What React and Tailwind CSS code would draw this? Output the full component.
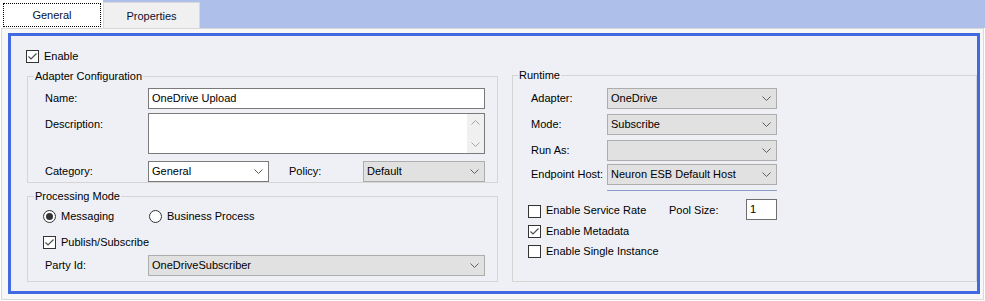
import React from "react";

function Chevron({ up = false, color = "#606060" }) {
  return (
    <svg width="9" height="5" viewBox="0 0 9 5" className="block shrink-0">
      <path
        d={up ? "M0.5 4.5 L4.5 0.5 L8.5 4.5" : "M0.5 0.5 L4.5 4.5 L8.5 0.5"}
        fill="none"
        stroke={color}
        strokeWidth="1"
      />
    </svg>
  );
}

function Select({ value, className, white = false }) {
  return (
    <div
      className={
        "flex h-[21px] items-center justify-between pl-[3px] pr-[5px] border " +
        (white ? "bg-white border-[#7a7a7a] " : "bg-[#e1e1e1] border-[#adadad] ") +
        className
      }
    >
      <span className="whitespace-nowrap">{value}</span>
      <Chevron />
    </div>
  );
}

function CheckBox({ checked = false, className = "" }) {
  return (
    <span
      className={
        "flex h-[13px] w-[13px] shrink-0 items-center justify-center border border-[#333333] bg-white " +
        className
      }
    >
      {checked && (
        <svg width="11" height="11" viewBox="0 0 11 11" className="block">
          <path d="M1.5 5.5 L4 8 L9.5 2.5" fill="none" stroke="#4d4d4d" strokeWidth="1.2" />
        </svg>
      )}
    </span>
  );
}

function Radio({ checked = false }) {
  return (
    <span className="flex h-[13px] w-[13px] shrink-0 items-center justify-center rounded-full border border-[#333333] bg-white">
      {checked && <span className="block h-[7px] w-[7px] rounded-full bg-[#333333]" />}
    </span>
  );
}

export default function App() {
  return (
    <div className="h-[301px] w-[985px] overflow-hidden bg-white text-[11px] leading-[13px] text-black font-['Liberation_Sans',Arial,sans-serif]">
      {/* Tabs */}
      <div className="flex h-[28px] bg-[#aec0e9]">
        <div className="h-[28px] w-[103px] bg-white p-[3px]">
          <div className="flex h-[24px] w-[98px] items-center justify-center border border-dotted border-black text-[#0b1030]">
            General
          </div>
        </div>
        <div className="mt-[2px] flex h-[26px] w-[97px] items-center justify-center border border-b-0 border-[#d9d9d9] bg-[#f0f0f0] pt-[2px] text-[#0b1030]">
          Properties
        </div>
      </div>

      {/* Panel */}
      <div className="ml-[1px] h-[272px] w-[983px] border border-[#d9d9d9] bg-[#f7f7f7] pb-[5px] pl-[6px] pr-[3px] pt-[4px]">
        <div className="h-full w-full border-[3px] border-[#4169e1] bg-[#eef0f5] pt-[14px]">
          {/* Enable */}
          <div className="flex h-[13px] items-center pl-[15px]">
            <CheckBox checked />
            <span className="ml-[5px]">Enable</span>
          </div>

          <div className="mt-[6px] flex items-start gap-[14px] pl-[16px]">
            {/* Left column */}
            <div className="w-[471px] pt-[1px]">
              <fieldset className="border border-[#d5d5d5] pb-0 pl-[17px] pr-[12px] pt-[5px]">
                <legend className="-ml-[11px] px-[1px] leading-[13px]">Adapter Configuration</legend>
                <div className="flex h-[21px] items-center">
                  <span className="w-[103px]">Name:</span>
                  <div className="flex h-[21px] w-[337px] items-center border border-[#7a7a7a] bg-white pl-[3px]">
                    OneDrive Upload
                  </div>
                </div>
                <div className="mt-[4px] flex items-start">
                  <span className="w-[103px] pt-[5px]">Description:</span>
                  <div className="flex h-[41px] w-[337px] justify-end border border-[#7a7a7a] bg-white">
                    <div className="flex w-[17px] flex-col bg-[#f0f0f0]">
                      <div className="flex h-[17px] items-center justify-center">
                        <Chevron up color="#a6a6a6" />
                      </div>
                      <div className="flex-1" />
                      <div className="flex h-[17px] items-center justify-center">
                        <Chevron color="#a6a6a6" />
                      </div>
                    </div>
                  </div>
                </div>
                <div className="mt-[7px] flex h-[21px] items-center">
                  <span className="w-[103px]">Category:</span>
                  <Select value="General" white className="w-[121px]" />
                  <span className="ml-[20px] w-[74px]">Policy:</span>
                  <Select value="Default" className="w-[122px]" />
                </div>
              </fieldset>

              <fieldset className="mt-[7px] border border-[#d5d5d5] pb-[5px] pl-[15px] pr-[12px] pt-[7px]">
                <legend className="-ml-[9px] px-[1px] leading-[13px]">Processing Mode</legend>
                <div className="flex h-[13px] items-center">
                  <div className="flex w-[106px] items-center">
                    <Radio checked />
                    <span className="ml-[5px]">Messaging</span>
                  </div>
                  <div className="flex items-center">
                    <Radio />
                    <span className="ml-[5px]">Business Process</span>
                  </div>
                </div>
                <div className="mt-[13px] flex h-[13px] items-center">
                  <CheckBox checked />
                  <span className="ml-[5px]">Publish/Subscribe</span>
                </div>
                <div className="mt-[6px] flex h-[21px] items-center">
                  <span className="ml-[2px] w-[103px]">Party Id:</span>
                  <Select value="OneDriveSubscriber" className="w-[337px]" />
                </div>
              </fieldset>
            </div>

            {/* Right column */}
            <div className="flex-1">
              <fieldset className="border border-[#d5d5d5] pb-[23px] pl-[15px] pt-[6px]">
                <legend className="-ml-[10px] px-[1px] leading-[13px]">Runtime</legend>
                <div className="flex h-[21px] items-center pl-[3px]">
                  <span className="w-[76px] whitespace-nowrap">Adapter:</span>
                  <Select value="OneDrive" className="w-[170px]" />
                </div>
                <div className="mt-[5px] flex h-[21px] items-center pl-[3px]">
                  <span className="w-[76px] whitespace-nowrap">Mode:</span>
                  <Select value="Subscribe" className="w-[170px]" />
                </div>
                <div className="mt-[5px] flex h-[21px] items-center pl-[3px]">
                  <span className="w-[76px] whitespace-nowrap">Run As:</span>
                  <Select value="" className="w-[170px]" />
                </div>
                <div className="mt-[3px] flex h-[21px] items-center pl-[3px]">
                  <span className="w-[76px] whitespace-nowrap">Endpoint Host:</span>
                  <Select value="Neuron ESB Default Host" className="w-[170px]" />
                </div>
                <div className="ml-[79px] mt-[5px] h-[1px] w-[170px] bg-[#8b9bc7]" />

                <div className="mt-[8px] flex h-[21px] items-start">
                  <CheckBox className="mt-[6px]" />
                  <span className="ml-[5px] mt-[5px] w-[123px] whitespace-nowrap">Enable Service Rate</span>
                  <span className="mt-[5px] w-[77px] whitespace-nowrap">Pool Size:</span>
                  <div className="flex h-[21px] w-[31px] items-center border border-[#6e6e6e] bg-white pl-[3px]">
                    1
                  </div>
                </div>
                <div className="mt-[5px] flex h-[13px] items-center">
                  <CheckBox checked />
                  <span className="ml-[5px]">Enable Metadata</span>
                </div>
                <div className="mt-[7px] flex h-[13px] items-center">
                  <CheckBox />
                  <span className="ml-[5px]">Enable Single Instance</span>
                </div>
              </fieldset>
            </div>
          </div>
        </div>
      </div>
    </div>
  );
}
